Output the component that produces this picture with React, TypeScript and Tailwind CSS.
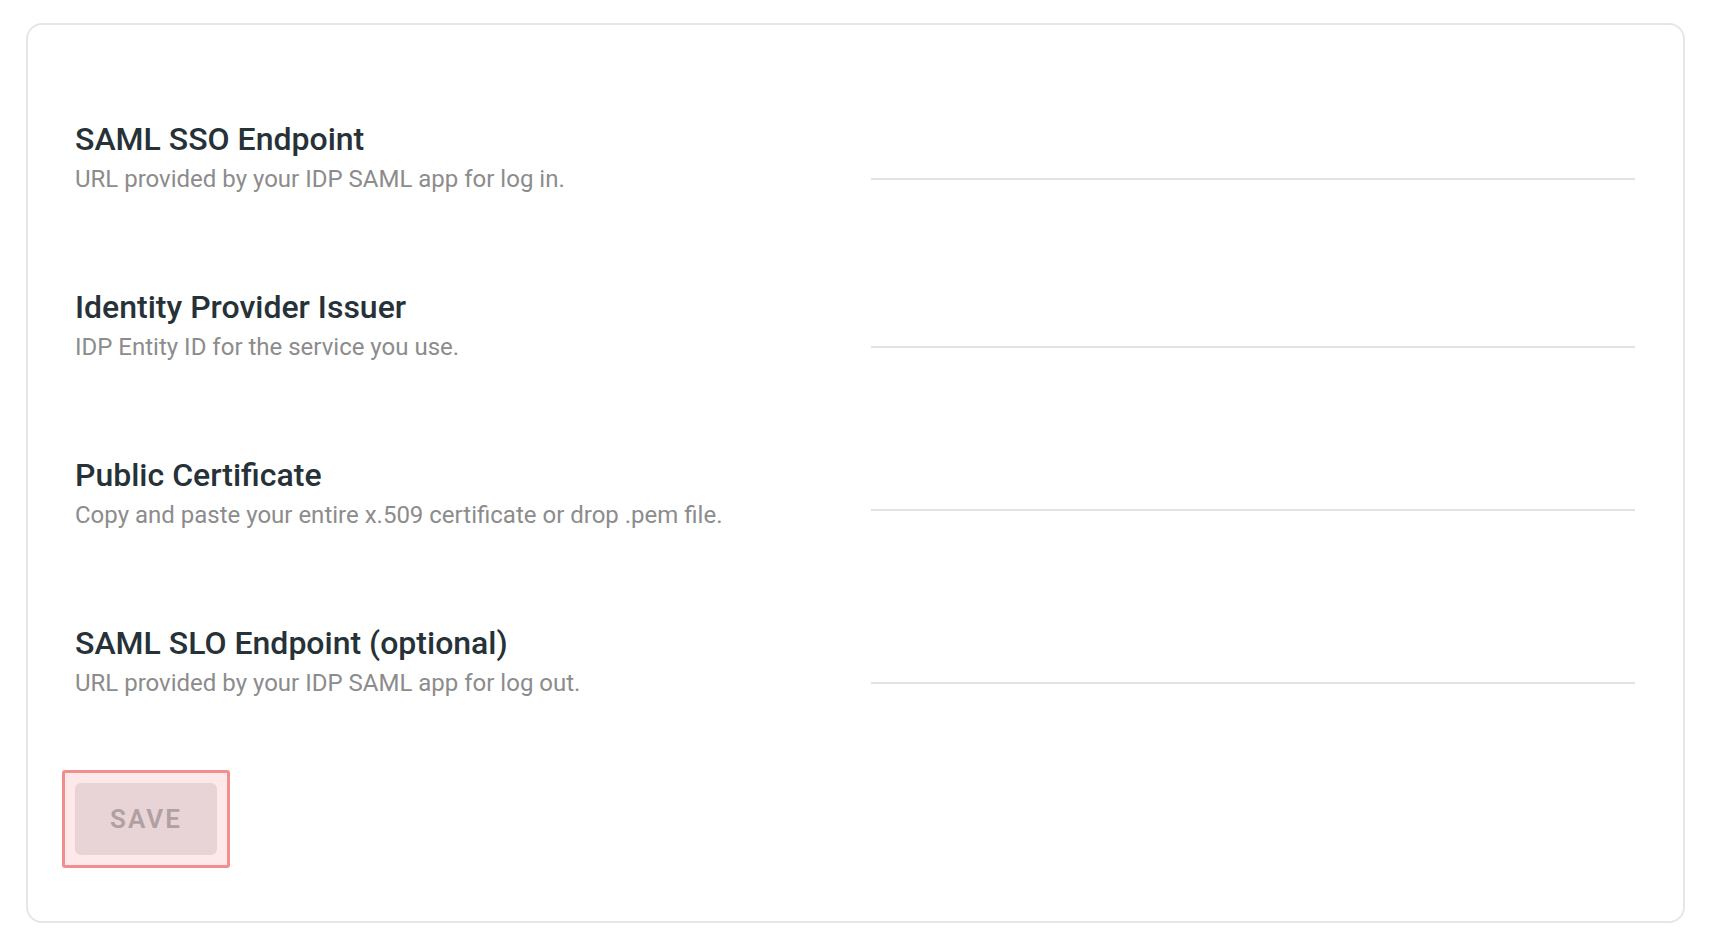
const fields = [
  { title: "SAML SSO Endpoint", hint: "URL provided by your IDP SAML app for log in.", lineTop: "mt-[57px]" },
  { title: "Identity Provider Issuer", hint: "IDP Entity ID for the service you use.", lineTop: "mt-[57px]" },
  { title: "Public Certificate", hint: "Copy and paste your entire x.509 certificate or drop .pem file.", lineTop: "mt-[52px]" },
  { title: "SAML SLO Endpoint (optional)", hint: "URL provided by your IDP SAML app for log out.", lineTop: "mt-[57px]" },
]

export default function App() {
  return (
    <div className="min-h-screen bg-white px-[26px] pt-[23px] font-['Roboto',sans-serif]">
      <div className="w-[1659px] h-[900px] rounded-[16px] border-2 border-[#e6e6e6] bg-white pl-[47px] pr-[48px] pt-[96px]">
        <div className="flex flex-col gap-[94px]">
          {fields.map(f => (
            <div key={f.title} className="flex">
              <div className="w-[796px] shrink-0">
                <h2 className="text-[32px] leading-[36px] font-medium text-[#263238]">{f.title}</h2>
                <p className="mt-[6px] text-[24px] leading-[32px] text-[#8c8c8c]">{f.hint}</p>
              </div>
              <div className="flex-1">
                <div className={`${f.lineTop} h-[2px] bg-[#e3e3e3]`} />
              </div>
            </div>
          ))}
        </div>

        <div className="mt-[71px] -ml-[13px] inline-flex rounded-[3px] border-[3px] border-[#f28e8e] bg-[#fde9e9] p-[10px]">
          <button
            type="button"
            disabled
            className="flex h-[72px] w-[142px] items-center justify-center rounded-[6px] bg-[#e8d4d7] text-[26px] font-semibold tracking-[0.08em] text-[#b0a0a3]"
          >
            SAVE
          </button>
        </div>
      </div>
    </div>
  )
}
